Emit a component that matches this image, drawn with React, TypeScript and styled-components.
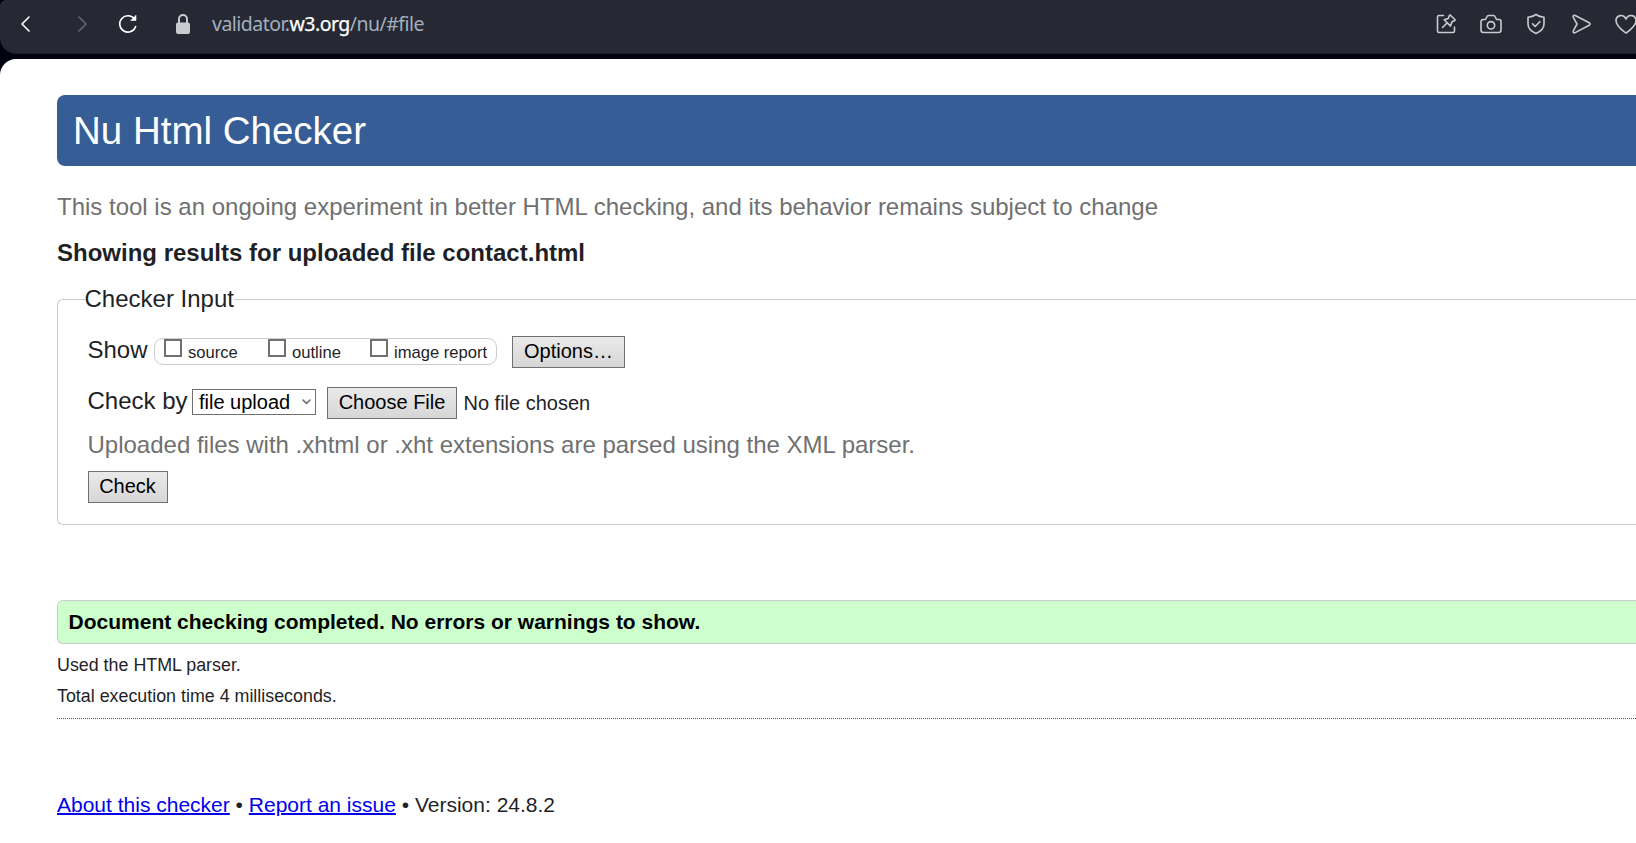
import React from 'react';
import styled, { createGlobalStyle } from 'styled-components';

const GlobalStyle = createGlobalStyle`
  * { box-sizing: border-box; }
  html, body { margin: 0; background: #fff; overflow: hidden; }
  body { font-family: "Liberation Sans", Arial, sans-serif; color: #1f1f26; }
`;

const Window = styled.div`
  width: 100%;
  height: 843px;
  overflow: hidden;
  background: #01020f;
`;

const Toolbar = styled.header`
  display: flex;
  align-items: center;
  height: 54px;
  padding: 0 0 5px 18px;
  background: #262933;
  border-bottom: 1px solid #1c1e28;
  border-radius: 6px 0 0 16px;
  overflow: hidden;
`;

const Glyph = styled.svg<{ $gap?: number; $tone?: string }>`
  flex: none;
  display: block;
  margin-right: ${(p) => p.$gap ?? 0}px;
  color: ${(p) => p.$tone ?? '#c9cccf'};
  fill: none;
  stroke: currentColor;
  stroke-width: 1.6;
  stroke-linecap: round;
  stroke-linejoin: round;
`;

const Address = styled.div`
  flex: 1;
  font: 19.5px/26px "Noto Sans", "Open Sans", sans-serif;
  letter-spacing: -0.53px;
  color: #a3afbe;
  white-space: nowrap;
  b { font-weight: 400; color: #fff; -webkit-text-stroke: 0.25px #fff; }
`;

const Actions = styled.div`
  display: flex;
  align-items: center;
  gap: 21px;
  margin-right: -2px;
`;

const Page = styled.main`
  height: 784px;
  margin-top: 5px;
  padding: 36px 0 0 57px;
  background: #fff;
  border-top-left-radius: 16px;
`;

const Banner = styled.h1`
  margin: 0;
  height: 71px;
  padding-left: 16px;
  border-radius: 8px 0 0 8px;
  background: #365d95;
  color: #fff;
  font-weight: 400;
  font-size: 38.5px;
  line-height: 71px;
`;

const Line = styled.p<{ $size: number; $top: number; $bold?: boolean; $color?: string }>`
  margin: ${(p) => p.$top}px 0 0;
  font-size: ${(p) => p.$size}px;
  line-height: 28px;
  font-weight: ${(p) => (p.$bold ? 700 : 400)};
  color: ${(p) => p.$color ?? 'inherit'};
  white-space: nowrap;
`;

const Inputs = styled.fieldset`
  min-width: 0;
  height: 240px;
  margin: 18px 0 0;
  padding: 0 0 0 29.5px;
  border: 1px solid #ccc;
  border-right: 0;
  border-radius: 6px 0 0 6px;
`;

const Legend = styled.legend`
  margin-left: -3px;
  padding: 0;
  font-size: 24px;
  line-height: 28px;
`;

const Row = styled.div<{ $top: number }>`
  display: flex;
  align-items: flex-start;
  height: 32px;
  margin-top: ${(p) => p.$top}px;
  white-space: nowrap;
`;

const Label = styled.span<{ $width: number }>`
  width: ${(p) => p.$width}px;
  font-size: 24px;
  line-height: 28px;
`;

const ShowOptions = styled.div`
  display: flex;
  width: 343px;
  height: 27px;
  margin: 2px 15px 0 0;
  padding-left: 9px;
  border: 1px solid #ccc;
  border-radius: 9px;
`;

const Option = styled.label<{ $width: number }>`
  display: flex;
  gap: 6px;
  width: ${(p) => p.$width}px;
  font-size: 16.6px;
  line-height: 27px;
`;

const Checkbox = styled.span`
  width: 18px;
  height: 18px;
  border: 2px solid #707070;
  background: #fff;
`;

const Button = styled.button<{ $width: number }>`
  width: ${(p) => p.$width}px;
  height: 32px;
  padding: 0 0 2px;
  border: 1px solid #707070;
  border-radius: 0;
  background: linear-gradient(#eaeaea, #d6d6d6);
  color: #000;
  font: 20px/28px "Liberation Sans", Arial, sans-serif;
`;

const Select = styled.div`
  display: flex;
  align-items: center;
  justify-content: space-between;
  width: 124px;
  height: 26px;
  margin: 2px 11px 0 0;
  padding: 0 4px 0 6px;
  border: 1px solid #707070;
  color: #000;
  font-size: 20px;
  line-height: 24px;
`;

const FileName = styled.span`
  margin-left: 6.5px;
  font-size: 20px;
  line-height: 32px;
`;

const Success = styled.p`
  height: 44px;
  margin: 75px 0 0;
  padding-left: 10.6px;
  border: 1px solid #ccc;
  border-right: 0;
  border-radius: 6px 0 0 6px;
  background: #ccffcc;
  color: #000;
  font-size: 21px;
  font-weight: 700;
  line-height: 42px;
`;

const Divider = styled.hr`
  margin: 8px 0 0;
  border: 0;
  border-top: 1px dotted #555;
`;

const Link = styled.a`
  color: #0000ee;
  text-decoration: underline;
  text-decoration-thickness: 2px;
`;

export default function App() {
  return (
    <>
      <GlobalStyle />
      <Window>
        <Toolbar>
          <Glyph width="14" height="18" viewBox="0 0 14 18" $gap={44} $tone="#fff"><path d="M11 2 4 9l7 7" /></Glyph>
          <Glyph width="14" height="18" viewBox="0 0 14 18" $gap={27} $tone="#656873"><path d="M3 2l7 7-7 7" /></Glyph>
          <Glyph width="22" height="22" viewBox="0 0 22 22" $gap={35} $tone="#fff">
            <path d="M18.7 13.5A8.2 8.2 0 1 1 17.5 6" /><path d="M19 2.5v5h-5z" fill="currentColor" strokeWidth=".6" />
          </Glyph>
          <Glyph width="20" height="22" viewBox="0 0 20 22" $gap={18}>
            <rect x="2" y="9.5" width="14" height="11.5" rx="2" fill="currentColor" stroke="none" />
            <path d="M5 10V6a4 4 0 0 1 8 0v4" strokeWidth="2" />
          </Glyph>
          <Address>validator.<b>w3.org</b>/nu/#file</Address>
          <Actions>
            <Glyph width="24" height="24" viewBox="0 0 24 24">
              <path d="M9.5 3.5H5A1.5 1.5 0 0 0 3.5 5v14A1.5 1.5 0 0 0 5 20.500h14a1.5 1.5 0 0 0 1.5-1.500v-4" />
              <path d="M16.5 3.2l4.3 4.3c.5.5.3 1-.3 1.2l-2.5 1.1-1.5 4.3-6.3-6.3 4-1.3 1.2-2.9c.3-.6.7-.8 1.1-.4zM12.8 11.2 8.5 15.500" />
            </Glyph>
            <Glyph width="24" height="24" viewBox="0 0 24 24">
              <path d="M4 7.5h2.5L8 4.5Q8.4 3.5 9.5 3.5h5Q15.6 3.5 16 4.5l1.5 3H20a2 2 0 0 1 2 2V18a2.5 2.5 0 0 1-2.5 2.5h-15A2.5 2.5 0 0 1 2 18V9.5a2 2 0 0 1 2-2z" />
              <circle cx="12" cy="13.3" r="3.7" />
            </Glyph>
            <Glyph width="24" height="24" viewBox="0 0 24 24">
              <path d="M12 2.5C9.5 4.3 7 5 4 5.2V12c0 4.5 3.5 7.5 8 9.5 4.5-2 8-5 8-9.500V5.2C17 5 14.5 4.3 12 2.5z" />
              <path d="m8.500 11.8 2.7 2.7 4.6-4.8" />
            </Glyph>
            <Glyph width="24" height="24" viewBox="0 0 24 24">
              <path d="M4.300 5.300c-.6-1.500.4-2.500 1.900-1.800l14 7.300c1.100.6 1.100 1.800 0 2.400l-14 7.400c-1.500.7-2.500-.3-1.900-1.800L8 12z" />
            </Glyph>
            <Glyph width="24" height="24" viewBox="0 0 24 24">
              <path d="M12 21C8 18 2 14 2 8.7 2 3 9.5 1.5 12 7c2.5-5.500 10-4 10 1.7C22 14 16 18 12 21z" />
            </Glyph>
          </Actions>
        </Toolbar>
        <Page>
          <Banner>Nu Html Checker</Banner>
          <Line $size={24} $top={27} $color="#707070">
            This tool is an ongoing experiment in better HTML checking, and its behavior remains subject to change
          </Line>
          <Line $size={24} $top={18} $bold>Showing results for uploaded file contact.html</Line>
          <Inputs>
            <Legend>Checker Input</Legend>
            <Row $top={23}>
              <Label $width={66.5}>Show</Label>
              <ShowOptions>
                <Option $width={104}><Checkbox />source</Option>
                <Option $width={102}><Checkbox />outline</Option>
                <Option $width={125}><Checkbox />image report</Option>
              </ShowOptions>
              <Button $width={113}>Options…</Button>
            </Row>
            <Row $top={19}>
              <Label $width={104.5}>Check by</Label>
              <Select>
                file upload
                <Glyph width="9" height="6" viewBox="0 0 9 6" $tone="#707070"><path d="m1 1 3.5 3.5L8 1" /></Glyph>
              </Select>
              <Button $width={130}>Choose File</Button>
              <FileName>No file chosen</FileName>
            </Row>
            <Line $size={24} $top={12} $color="#707070">
              Uploaded files with .xhtml or .xht extensions are parsed using the XML parser.
            </Line>
            <Row $top={12}>
              <Button $width={80}>Check</Button>
            </Row>
          </Inputs>
          <Success>Document checking completed. No errors or warnings to show.</Success>
          <Line $size={17.85} $top={7}>Used the HTML parser.</Line>
          <Line $size={17.85} $top={3}>Total execution time 4 milliseconds.</Line>
          <Divider />
          <Line $size={21} $top={72}>
            <Link>About this checker</Link> • <Link>Report an issue</Link> • Version: 24.8.2
          </Line>
        </Page>
      </Window>
    </>
  );
}
